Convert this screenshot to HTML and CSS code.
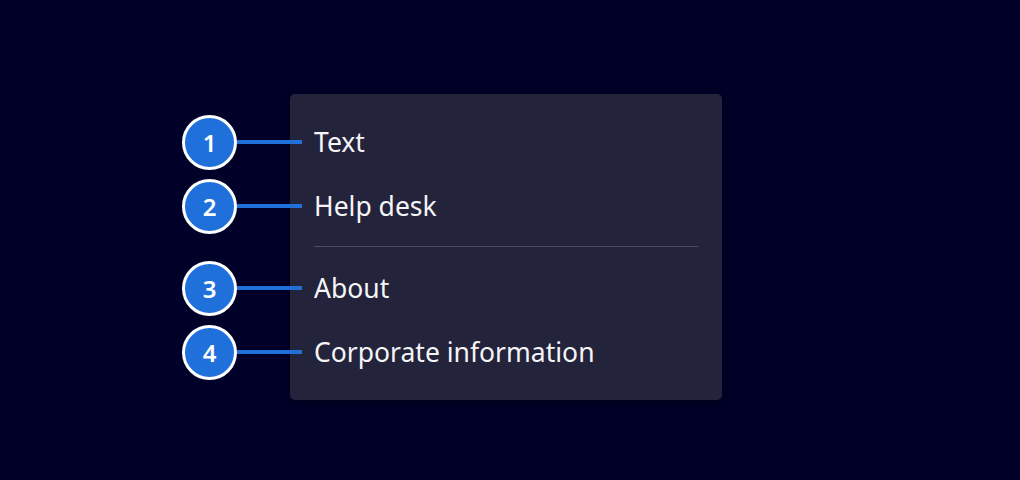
FILE: index.html
```html
<!DOCTYPE html>
<html lang="en">
<head>
  <meta charset="UTF-8">
  <title>Menu callouts</title>
  <link rel="stylesheet" href="styles.css">
</head>
<body>
  <div class="stage">
    <!-- Nummern links vom Menü -->
    <div class="callouts">
      <div class="callout"><span class="badge">1</span><span class="leader"></span></div>
      <div class="callout"><span class="badge">2</span><span class="leader"></span></div>
      <div class="callout-gap"></div>
      <div class="callout"><span class="badge">3</span><span class="leader"></span></div>
      <div class="callout"><span class="badge">4</span><span class="leader"></span></div>
    </div>

    <div class="menu">
      <div class="menu-item">Text</div>
      <div class="menu-item">Help desk</div>
      <div class="menu-divider"></div>
      <div class="menu-item">About</div>
      <div class="menu-item">Corporate information</div>
    </div>
  </div>
</body>
</html>
```

FILE: styles.css
```css
html, body {
  margin: 0;
  padding: 0;
  height: 100%;
  background-color: #000028;
  font-family: "Noto Sans", "Open Sans", sans-serif;
  color: #f5f5f7;
}

.stage {
  display: flex;
  align-items: flex-start;
  padding-top: 94px;
  padding-left: 182px;
}

/* Nummern-Spalte */
.callouts {
  display: flex;
  flex-direction: column;
  padding-top: 16px;
  margin-right: -12px;
  position: relative;
  z-index: 1;
}
.callout {
  height: 64px;
  display: flex;
  align-items: center;
}
.callout-gap {
  height: 18px;
}
.badge {
  width: 49px;
  height: 49px;
  border: 3px solid #ffffff;
  border-radius: 50%;
  background-color: #2070dc;
  color: #ffffff;
  font-weight: 600;
  font-size: 24px;
  display: flex;
  align-items: center;
  justify-content: center;
}
.leader {
  width: 65px;
  height: 4px;
  background-color: #2070dc;
}

/* Menü */
.menu {
  width: 432px;
  box-sizing: border-box;
  padding: 16px 24px;
  background-color: #23233c;
  border-radius: 5px;
  box-shadow: 0 2px 8px rgba(0, 0, 0, 0.4);
}
.menu-item {
  height: 64px;
  display: flex;
  align-items: center;
  font-size: 26.5px;
}
.menu-divider {
  height: 1px;
  margin: 8px 0 9px;
  background-color: #4c4c64;
}
```
